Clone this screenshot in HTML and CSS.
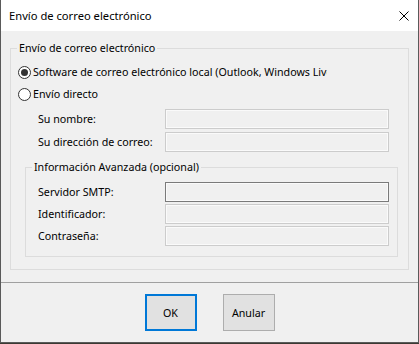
FILE: index.html
```html
<!DOCTYPE html>
<html lang="es">
<head>
    <meta charset="UTF-8">
    <meta name="viewport" content="width=device-width, initial-scale=1.0">
    <title>Envío de correo electrónico</title>
    <link rel="stylesheet" href="styles.css">
</head>
<body>

    <div class="window">
        <!-- Title bar -->
        <div class="titlebar">
            <span class="title">Envío de correo electrónico</span>
            <svg class="close" width="10" height="10" viewBox="0 0 10 10">
                <path d="M0.5 0.5 L9.5 9.5 M9.5 0.5 L0.5 9.5" stroke="#000" stroke-width="1" fill="none"/>
            </svg>
        </div>

        <!-- Main area -->
        <div class="main">
            <fieldset class="group outer">
                <legend>Envío de correo electrónico</legend>
                <div class="group-body">
                    <div class="radio-row">
                        <span class="radio checked"></span>
                        <span class="radio-text">Software de correo electrónico local (Outlook, Windows Live Mail, Thunderbird...)</span>
                    </div>
                    <div class="radio-row">
                        <span class="radio"></span>
                        <span class="radio-text">Envío directo</span>
                    </div>

                    <div class="fields direct">
                        <label>Su nombre:</label>
                        <span class="input"></span>
                        <label>Su dirección de correo:</label>
                        <span class="input"></span>
                    </div>

                    <fieldset class="group inner">
                        <legend>Información Avanzada (opcional)</legend>
                        <div class="fields advanced">
                            <label>Servidor SMTP:</label>
                            <span class="input active"></span>
                            <label>Identificador:</label>
                            <span class="input"></span>
                            <label>Contraseña:</label>
                            <span class="input"></span>
                        </div>
                    </fieldset>
                </div>
            </fieldset>
        </div>

        <!-- Buttons -->
        <div class="footer">
            <button class="btn default">OK</button>
            <button class="btn">Anular</button>
        </div>
    </div>

</body>
</html>
```

FILE: styles.css
```css
body {
    margin: 0;
    background-color: #3b3a32;
    font-family: "Noto Sans", "Open Sans", sans-serif;
    font-size: 10.7px;
    color: #000;
}
.window {
    width: 419px;
    height: 343px;
    box-sizing: border-box;
    border: 1px solid #5a5a5a;
    border-top: none;
    background-color: #f0f0f0;
}
.titlebar {
    height: 31px;
    background-color: #fff;
    display: flex;
    align-items: center;
    justify-content: space-between;
    padding: 0 9px 0 8px;
}
.title {
    font-size: 11.2px;
}
.close {
    display: block;
}
.main {
    height: 252px;
    box-sizing: border-box;
    padding: 10px 0 0 9px;
    border-bottom: 1px solid #a0a0a0;
}
.group {
    margin: 0;
    padding: 0;
    border: 1px solid #dcdcdc;
    min-inline-size: 0;
}
.group legend {
    margin-left: 6px;
    padding: 0 2px;
    line-height: 15px;
}
.outer {
    width: 399px;
    box-sizing: border-box;
}
.group-body {
    padding: 5px 0 12px 7px;
}
.radio-row {
    height: 22px;
    width: 309px;
    display: flex;
    align-items: center;
    gap: 2px;
    overflow: hidden;
    white-space: nowrap;
}
.radio {
    flex: none;
    width: 13px;
    height: 13px;
    box-sizing: border-box;
    border: 1px solid #333;
    border-radius: 50%;
    background-color: #fff;
    display: flex;
    align-items: center;
    justify-content: center;
}
.radio.checked::after {
    content: "";
    width: 7px;
    height: 7px;
    border-radius: 50%;
    background-color: #333;
}
.fields {
    display: grid;
    align-items: center;
}
.fields.direct {
    margin-top: 4px;
    grid-template-columns: 147px 224px;
    row-gap: 3px;
}
.fields.direct label {
    padding-left: 20px;
}
.fields.advanced {
    margin-top: 7px;
    padding-bottom: 10px;
    grid-template-columns: 139px 224px;
    row-gap: 2px;
}
.fields.advanced label {
    padding-left: 12px;
}
.input {
    height: 20px;
    box-sizing: border-box;
    border: 1px solid #cccccc;
    background-color: #f0f0f0;
    box-shadow: inset 0 0 0 1px #fafafa;
}
.input.active {
    border-color: #7a7a7a;
}
.inner {
    margin: 8px 0 0 7px;
    width: 373px;
    box-sizing: border-box;
}
.footer {
    height: 58px;
    box-sizing: border-box;
    padding-top: 11px;
    display: flex;
    justify-content: center;
    align-items: flex-start;
    gap: 26px;
}
.btn {
    width: 52px;
    height: 37px;
    box-sizing: border-box;
    border: 1px solid #adadad;
    background-color: #e1e1e1;
    font-family: inherit;
    font-size: 10.7px;
    color: #000;
    padding: 0;
}
.btn.default {
    border: 2px solid #0078d7;
}
```
